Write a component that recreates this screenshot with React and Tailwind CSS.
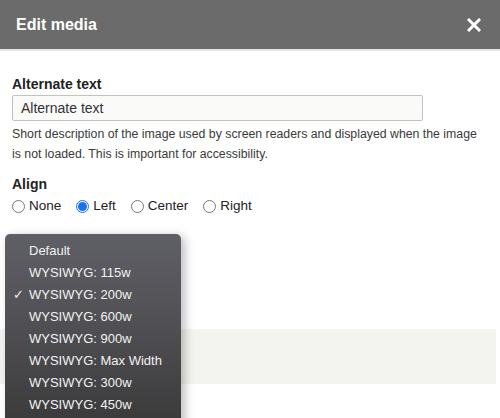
import React from 'react';

const sizes = [
  'Default',
  'WYSIWYG: 115w',
  'WYSIWYG: 200w',
  'WYSIWYG: 600w',
  'WYSIWYG: 900w',
  'WYSIWYG: Max Width',
  'WYSIWYG: 300w',
  'WYSIWYG: 450w',
];

const Radio = ({ label, checked }) => (
  <label className="flex items-center gap-[4px] mr-[15px]">
    {checked ? (
      <span className="w-[13px] h-[13px] rounded-full border border-[#1a73e8] flex items-center justify-center bg-white">
        <span className="w-[9px] h-[9px] rounded-full bg-[#1a73e8]" />
      </span>
    ) : (
      <span className="w-[13px] h-[13px] rounded-full border border-[#767676] bg-white" />
    )}
    <span>{label}</span>
  </label>
);

export default function App() {
  return (
    <div className="relative w-[500px] h-[418px] overflow-hidden bg-white font-['Liberation_Sans',Arial,sans-serif] text-[#222]">
      {/* header */}
      <div className="h-[49px] bg-[#6b6b6b] flex items-center justify-between pl-[16px] pr-[19px]">
        <h1 className="text-white font-bold text-[16px]">Edit media</h1>
        <svg width="14" height="14" viewBox="0 0 14 14" className="text-white">
          <path d="M2 2 L12 12 M12 2 L2 12" stroke="currentColor" strokeWidth="3" strokeLinecap="square" />
        </svg>
      </div>
      <div className="h-[2px] bg-[#e6e6e6]" />

      {/* form */}
      <div className="px-[12px] pt-[25px] h-[278px]">
        <div className="font-bold text-[14px] leading-[16px]">Alternate text</div>
        <div className="mt-[3px] w-[411px] h-[26px] border border-[#c2c2c2] rounded-[2px] bg-[#fafaf8] flex items-center pl-[8px] text-[14px] text-[#333]">
          Alternate text
        </div>
        <p className="mt-[3px] text-[12.3px] leading-[20px] text-[#3a3a3a] w-[476px]">
          Short description of the image used by screen readers and displayed when the image is not loaded. This is important for accessibility.
        </p>
        <div className="mt-[12px] font-bold text-[14px] leading-[16px]">Align</div>
        <div className="mt-[4px] flex items-center text-[13.5px]">
          <Radio label="None" />
          <Radio label="Left" checked />
          <Radio label="Center" />
          <Radio label="Right" />
        </div>
      </div>

      {/* footer band */}
      <div className="h-[55px] bg-[#f3f3ef] mr-[4px]" />

      {/* size dropdown */}
      <div className="absolute left-[5px] top-[234px] w-[176px] h-[200px] rounded-[5px] bg-gradient-to-b from-[#5f5f66] via-[#4e4e52] to-[#383838] shadow-[4px_2px_10px_rgba(0,0,0,0.25)] pt-[6px]">
        {sizes.map((s) => (
          <div key={s} className="relative h-[22px] flex items-center pl-[24px] text-[13px] text-[#f2f2f2]">
            {s === 'WYSIWYG: 200w' && (
              <span className="absolute left-[8px] text-[13px]">✓</span>
            )}
            {s}
          </div>
        ))}
      </div>
    </div>
  );
}
